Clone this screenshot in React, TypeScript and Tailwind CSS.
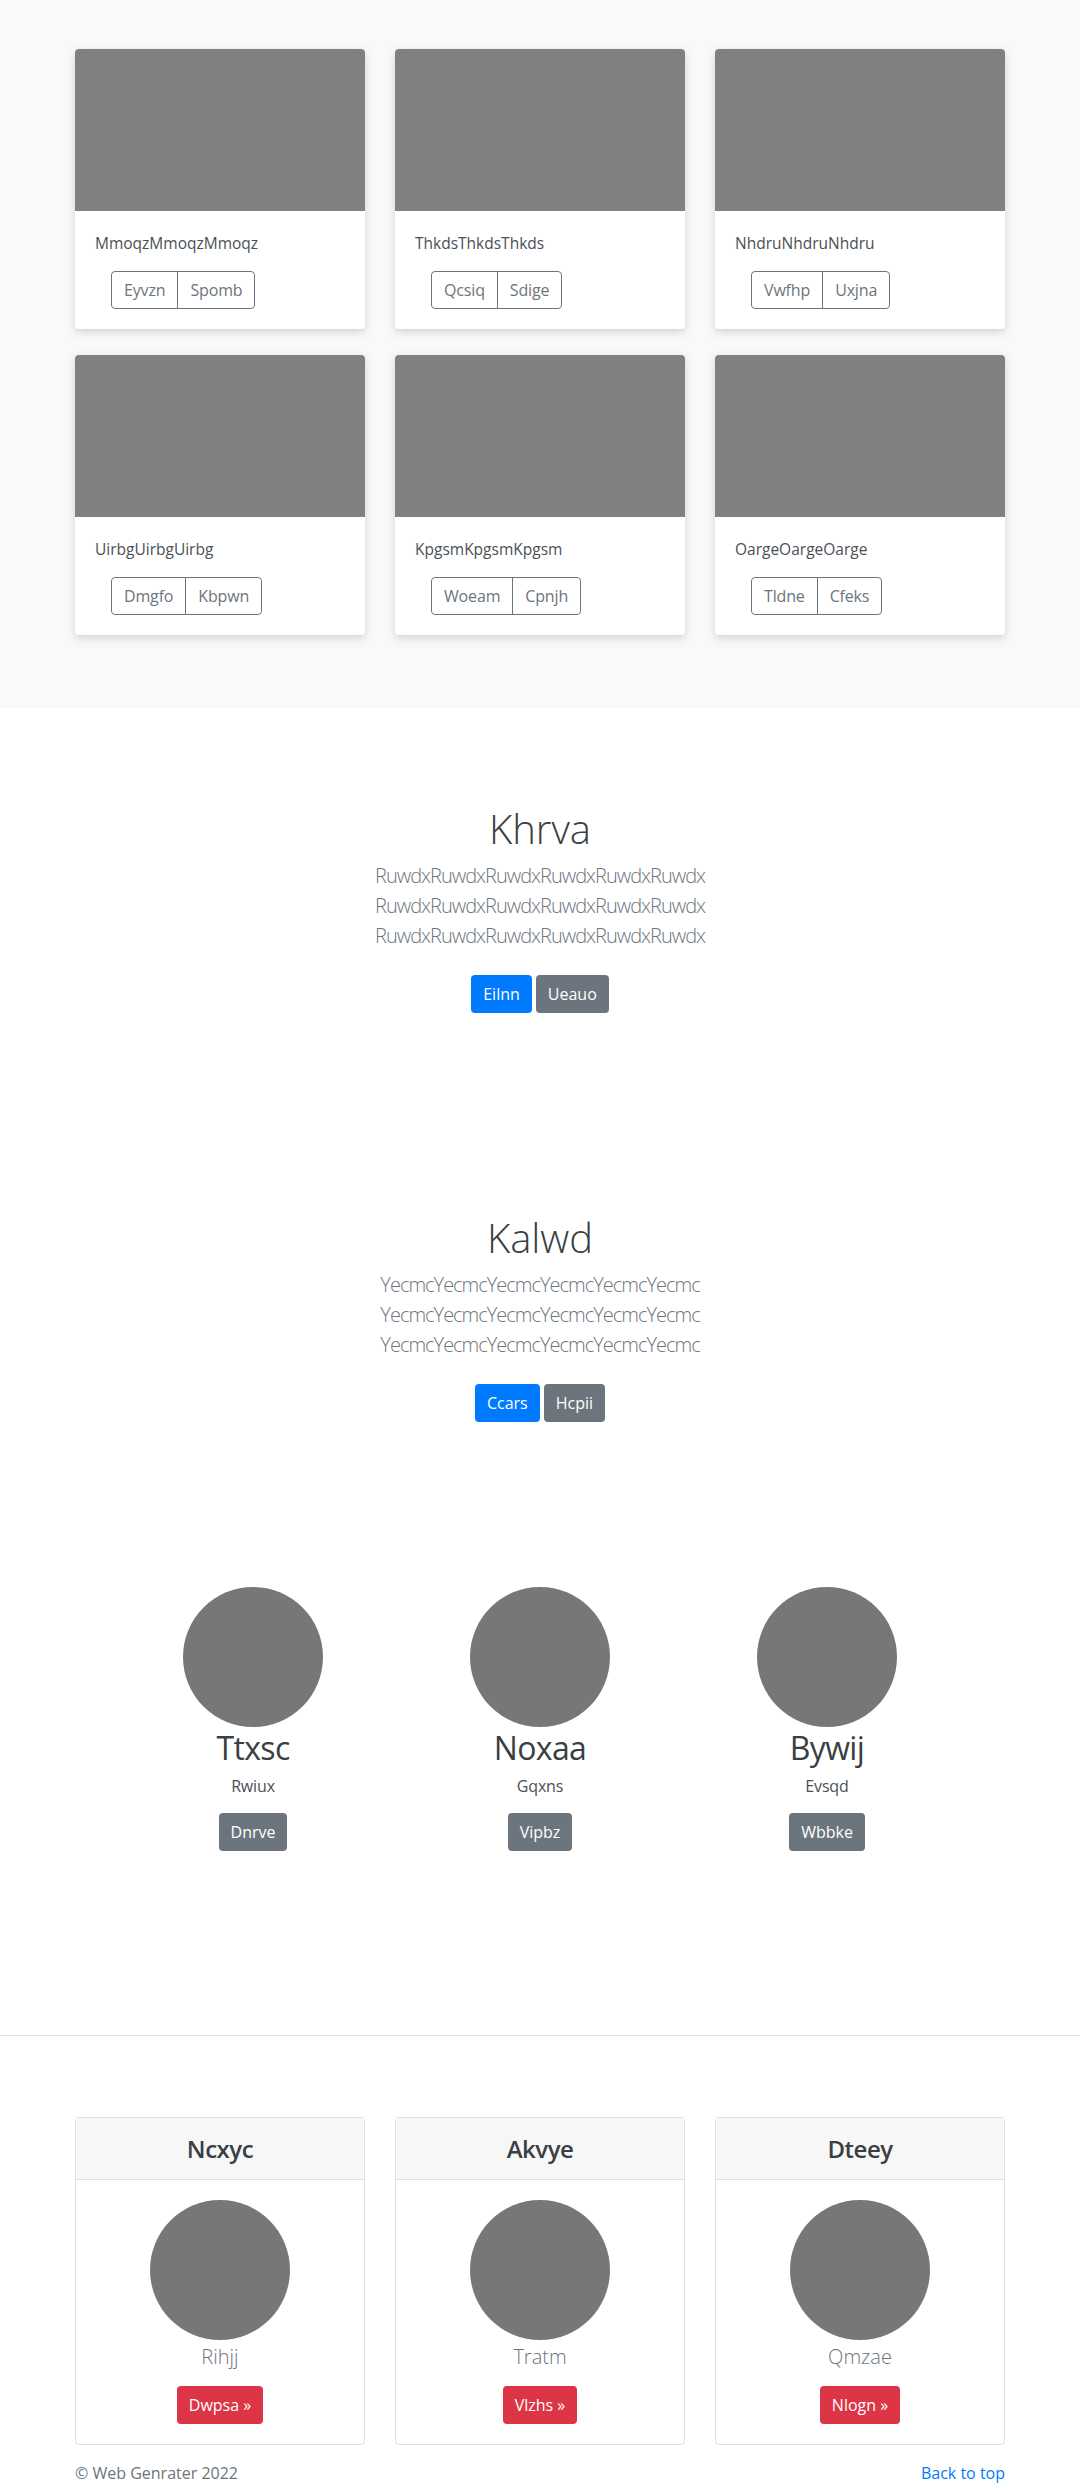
import React from 'react';

const albumCards = [
  { text: 'MmoqzMmoqzMmoqz', a: 'Eyvzn', b: 'Spomb' },
  { text: 'ThkdsThkdsThkds', a: 'Qcsiq', b: 'Sdige' },
  { text: 'NhdruNhdruNhdru', a: 'Vwfhp', b: 'Uxjna' },
  { text: 'UirbgUirbgUirbg', a: 'Dmgfo', b: 'Kbpwn' },
  { text: 'KpgsmKpgsmKpgsm', a: 'Woeam', b: 'Cpnjh' },
  { text: 'OargeOargeOarge', a: 'Tldne', b: 'Cfeks' },
];

const heroes = [
  { title: 'Khrva', word: 'Ruwdx', primary: 'Eilnn', secondary: 'Ueauo' },
  { title: 'Kalwd', word: 'Yecmc', primary: 'Ccars', secondary: 'Hcpii' },
];

const people = [
  { name: 'Ttxsc', sub: 'Rwiux', cta: 'Dnrve' },
  { name: 'Noxaa', sub: 'Gqxns', cta: 'Vipbz' },
  { name: 'Bywij', sub: 'Evsqd', cta: 'Wbbke' },
];

const plans = [
  { title: 'Ncxyc', sub: 'Rihjj', cta: 'Dwpsa' },
  { title: 'Akvye', sub: 'Tratm', cta: 'Vlzhs' },
  { title: 'Dteey', sub: 'Qmzae', cta: 'Nlogn' },
];

function Circle() {
  return <div className="h-[140px] w-[140px] rounded-full bg-[#777777]" />;
}

function AlbumCard({ text, a, b }: { text: string; a: string; b: string }) {
  return (
    <div className="flex flex-col rounded bg-white shadow-[0_3px_10px_rgba(0,0,0,0.16)]">
      <div className="h-[162px] rounded-t bg-[#808080]" />
      <div className="p-5">
        <p className="mb-4 text-[15.5px] leading-6 text-[#4a5056]">{text}</p>
        <div className="ml-4 flex">
          <button className="h-[38px] rounded-l border border-[#6c757d] px-3 text-base tracking-[-0.01em] text-[#6c757d]">{a}</button>
          <button className="-ml-px h-[38px] rounded-r border border-[#6c757d] px-3 text-base tracking-[-0.01em] text-[#6c757d]">{b}</button>
        </div>
      </div>
    </div>
  );
}

function Hero({ title, word, primary, secondary }: { title: string; word: string; primary: string; secondary: string }) {
  const line = word.repeat(6);
  return (
    <section className="flex flex-col items-center pt-[97px] pb-[104px] text-center">
      <h1 className="mb-2 text-[40px] leading-[48px] font-light text-[#3a3f44]">{title}</h1>
      <div className="mb-4 text-xl leading-[30px] font-light tracking-[-0.05em] text-[#6c757d]">
        <p>{line}</p>
        <p>{line}</p>
        <p>{line}</p>
      </div>
      <div className="mt-2 flex gap-1">
        <button className="h-[38px] rounded bg-[#007bff] px-3 text-base text-white">{primary}</button>
        <button className="h-[38px] rounded bg-[#6c757d] px-3 text-base text-white">{secondary}</button>
      </div>
    </section>
  );
}

export default function App() {
  return (
    <div className="font-['Open_Sans','Noto_Sans',sans-serif] bg-white text-[#212529]">
      <section className="bg-[#f8f9fa] pt-[49px] pb-[73px]">
        <div className="mx-auto grid w-[930px] grid-cols-3 gap-x-[30px] gap-y-[26px]">
          {albumCards.map((c) => (
            <AlbumCard key={c.text} {...c} />
          ))}
        </div>
      </section>

      {heroes.map((h) => (
        <Hero key={h.title} {...h} />
      ))}

      <section className="pt-[61px] pb-[184px]">
        <div className="mx-auto grid w-[861px] grid-cols-3">
          {people.map((p) => (
            <div key={p.name} className="flex flex-col items-center text-center">
              <Circle />
              <h2 className="mb-[6px] text-[32px] leading-[41px] tracking-[-0.02em] text-[#3a3f44]">{p.name}</h2>
              <p className="mb-[15px] text-base leading-6 tracking-[-0.01em] text-[#4a5056]">{p.sub}</p>
              <button className="h-[38px] rounded bg-[#6c757d] px-3 text-base text-white">{p.cta}</button>
            </div>
          ))}
        </div>
      </section>

      <hr className="border-t border-[#e2e2e2]" />

      <section className="pt-[81px]">
        <div className="mx-auto grid w-[930px] grid-cols-3 gap-x-[30px]">
          {plans.map((p) => (
            <div key={p.title} className="flex flex-col rounded border border-[#dfdfdf] text-center">
              <div className="flex h-[62px] items-center justify-center border-b border-[#dfdfdf] bg-[#f7f7f7]">
                <h4 className="text-2xl font-semibold tracking-[-0.02em] text-[#3a3f44]">{p.title}</h4>
              </div>
              <div className="flex flex-col items-center p-5">
                <Circle />
                <p className="mt-[2px] mb-[14px] text-xl leading-[30px] font-light text-[#6c757d]">{p.sub}</p>
                <button className="h-[38px] rounded bg-[#dc3545] px-3 text-base text-white">{p.cta} »</button>
              </div>
            </div>
          ))}
        </div>
      </section>

      <footer className="mx-auto flex w-[930px] justify-between pt-[16px] text-base leading-6">
        <p className="text-[#6c757d]">© Web Genrater 2022</p>
        <a href="#" className="text-[#007bff]">Back to top</a>
      </footer>
    </div>
  );
}
